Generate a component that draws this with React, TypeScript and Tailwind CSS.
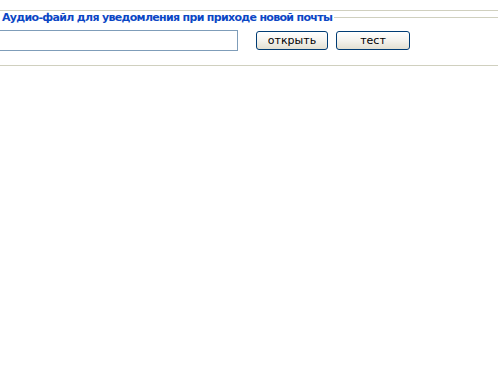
import React from "react";

const FONT = { fontFamily: '"DejaVu Sans", "Liberation Sans", sans-serif' };

function XpButton({ label, width }: { label: string; width: string }) {
  return (
    <button
      className={`${width} h-[19px] rounded-[3px] border border-[#003c74] bg-gradient-to-b from-white via-[#f4f3ee] to-[#e3e0d2] text-[11px] leading-none text-black`}
      style={FONT}
    >
      {label}
    </button>
  );
}

export default function App() {
  return (
    <div className="w-[498px] h-[381px] bg-white pt-[10px] overflow-hidden" style={FONT}>
      <div className="h-px bg-[#d0d0bf]" />

      {/* legend */}
      <div className="flex items-center h-[13px] mt-0">
        <span className="pl-[2px] pr-[2px] text-[11px] font-bold leading-none tracking-[-0.68px] text-[#0c47c5] whitespace-nowrap">
          Аудио-файл для уведомления при приходе новой почты
        </span>
        <div className="flex-1 h-px bg-[#d0d0bf]" />
      </div>

      {/* input + buttons */}
      <div className="flex items-center mt-[6px]">
        <input
          type="text"
          className="w-[238px] h-[21px] border border-l-0 border-[#7f9db9] bg-white outline-none"
        />
        <div className="ml-[18px] flex gap-[8px]">
          <XpButton label="открыть" width="w-[72px]" />
          <XpButton label="тест" width="w-[74px]" />
        </div>
      </div>

      <div className="mt-[14px] h-px bg-[#d0d0bf]" />
    </div>
  );
}
